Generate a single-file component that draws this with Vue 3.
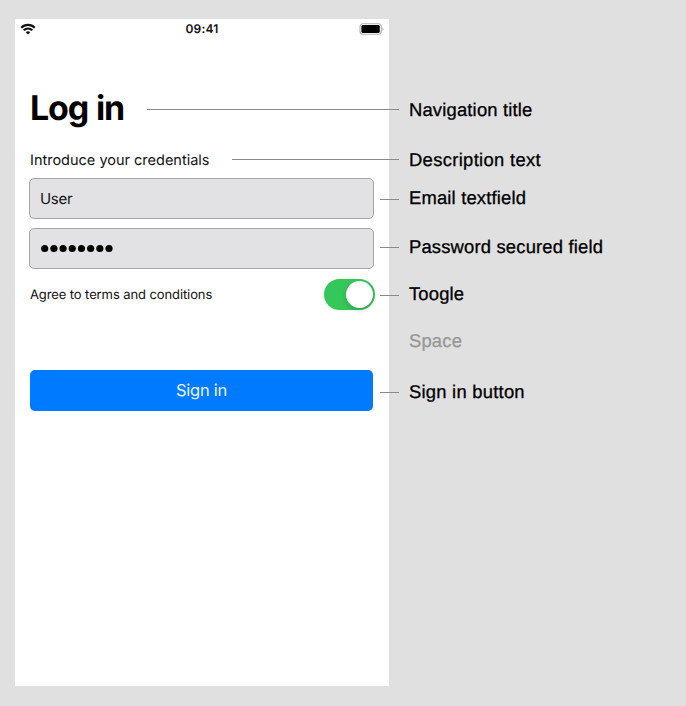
<script setup>
import { ref } from 'vue'

const user = ref('User')
const passwordLength = 8
const agreed = ref(true)

const labels = [
  { text: 'Navigation title', kind: 'title' },
  { text: 'Description text', kind: 'description' },
  { text: 'Email textfield', kind: 'email' },
  { text: 'Password secured field', kind: 'password' },
  { text: 'Toogle', kind: 'toggle' },
  { text: 'Space', kind: 'space' },
  { text: 'Sign in button', kind: 'button' }
]

const leaders = [
  { from: 147, y: 109 },
  { from: 232, y: 159 },
  { from: 380, y: 199 },
  { from: 380, y: 247 },
  { from: 380, y: 295 },
  { from: 380, y: 392 }
]
</script>

<template>
  <div class="board">
    <main class="phone">
      <header class="status">
        <svg class="wifi" width="16" height="12" viewBox="0 0 16 12">
          <g fill="none" stroke="#111" stroke-width="2.2">
            <path d="M1.2 4.7C5 .8 11 .8 14.8 4.7" />
            <path d="M3.7 7.3c2.5-2.4 6.1-2.4 8.6 0" />
          </g>
          <path d="M5.7 9.2c1.3-1.2 3.3-1.2 4.6 0L8 11.5z" fill="#111" />
        </svg>
        <span class="time">09:41</span>
        <svg class="battery" width="25" height="12" viewBox="0 0 25 12">
          <rect x="1" y=".7" width="21.3" height="10.6" rx="3" fill="#fff" stroke="#b0b0b0" stroke-width="1.1" />
          <rect x="2.4" y="2" width="18.4" height="8" rx="1.6" fill="#000" />
          <path d="M23.3 4.2c1.5.5 1.5 3.1 0 3.6z" fill="#b0b0b0" />
        </svg>
      </header>
      <h1 class="heading">Log in</h1>
      <p class="intro">Introduce your credentials</p>
      <div class="field"><span class="value">{{ user }}</span></div>
      <div class="field secure">
        <svg width="76" height="9" viewBox="0 0 76 9">
          <circle v-for="n in passwordLength" :key="n" :cx="4.7 + (n - 1) * 9.19" cy="4.5" r="3.6" />
        </svg>
      </div>
      <div class="agree">
        <span class="terms">Agree to terms and conditions</span>
        <span class="switch" :class="{ on: agreed }" @click="agreed = !agreed"><i class="knob"></i></span>
      </div>
      <button class="submit"><span>Sign in</span></button>
    </main>

    <aside class="labels">
      <div v-for="l in labels" :key="l.kind" class="label" :class="l.kind"><span>{{ l.text }}</span></div>
    </aside>

    <svg class="leaders" width="686" height="706" viewBox="0 0 686 706">
      <path v-for="l in leaders" :key="l.y" :d="`M${l.from} ${l.y + 0.5}H399`" stroke="#8a8a8a" />
    </svg>
  </div>
</template>

<style>
body {
  margin: 0;
  background: #e0e0e0;
}
</style>

<style scoped>
.board {
  position: relative;
  display: flex;
  box-sizing: border-box;
  width: 686px;
  height: 706px;
  padding: 19px 0 20px 15px;
  background: #e0e0e0;
  overflow: hidden;
  text-rendering: geometricPrecision;
}
.phone {
  box-sizing: border-box;
  width: 374px;
  height: 667px;
  padding: 0 14px;
  background: #fff;
  color: #111;
  font-family: Inter, "Liberation Sans", sans-serif;
}
.status {
  display: grid;
  grid-template-columns: 1fr auto 1fr;
  align-items: center;
  height: 20px;
  margin: 0 -9px 0 -9px;
}
.battery {
  justify-self: end;
}
.time {
  font-size: 12px;
  font-weight: 600;
  line-height: 20px;
  letter-spacing: 0.2px;
}
.heading {
  margin: 49px 0 0 1px;
  font-size: 34px;
  font-weight: 700;
  line-height: 42px;
  letter-spacing: -1.15px;
  word-spacing: 1px;
  color: #000;
}
.intro {
  margin: 21px 0 0 1px;
  font-size: 14.5px;
  line-height: 20px;
  white-space: nowrap;
}
.field {
  display: flex;
  align-items: center;
  box-sizing: border-box;
  width: 345px;
  height: 41px;
  margin-top: 7px;
  padding: 0 10px;
  border: 1px solid #a6a6a9;
  border-radius: 5px;
  background: #e2e2e4;
  font-size: 15px;
  letter-spacing: -0.3px;
}
.secure {
  margin-top: 9px;
}
.agree {
  display: flex;
  align-items: center;
  justify-content: space-between;
  height: 31px;
  margin: 10px 0 0 1px;
}
.terms {
  font-size: 13px;
  line-height: 17px;
  padding-top: 1px;
  letter-spacing: -0.1px;
}
.switch {
  display: flex;
  box-sizing: border-box;
  width: 51px;
  height: 31px;
  padding: 2px;
  border-radius: 16px;
  background: #e9e9ea;
}
.switch.on {
  justify-content: flex-end;
  background: #34c759;
}
.knob {
  width: 27px;
  height: 27px;
  border-radius: 50%;
  background: #fff;
  box-shadow: 0 2px 5px rgba(0, 0, 0, 0.18);
}
.submit {
  display: block;
  width: 343px;
  height: 40.5px;
  margin: 60px 0 0 1px;
  padding: 0;
  border: 0;
  border-radius: 5px;
  background: #007aff;
  color: #e6f4ff;
  font-family: inherit;
  font-size: 16.5px;
  letter-spacing: -0.25px;
}
.labels {
  padding: 80px 0 0 20px;
  font-family: "Liberation Sans", sans-serif;
  font-size: 18.4px;
  line-height: 22px;
  letter-spacing: 0.18px;
  color: #000;
  white-space: nowrap;
  -webkit-text-stroke: 0.3px currentColor;
}
.description { margin-top: 28px; letter-spacing: 0.33px; }
.email { margin-top: 16px; }
.password { margin-top: 27px; }
.toggle { margin-top: 25px; }
.space { margin-top: 25px; color: #979797; }
.button { margin-top: 29px; letter-spacing: 0.24px; }
.leaders {
  position: absolute;
  top: 0;
  left: 0;
  pointer-events: none;
}
</style>
